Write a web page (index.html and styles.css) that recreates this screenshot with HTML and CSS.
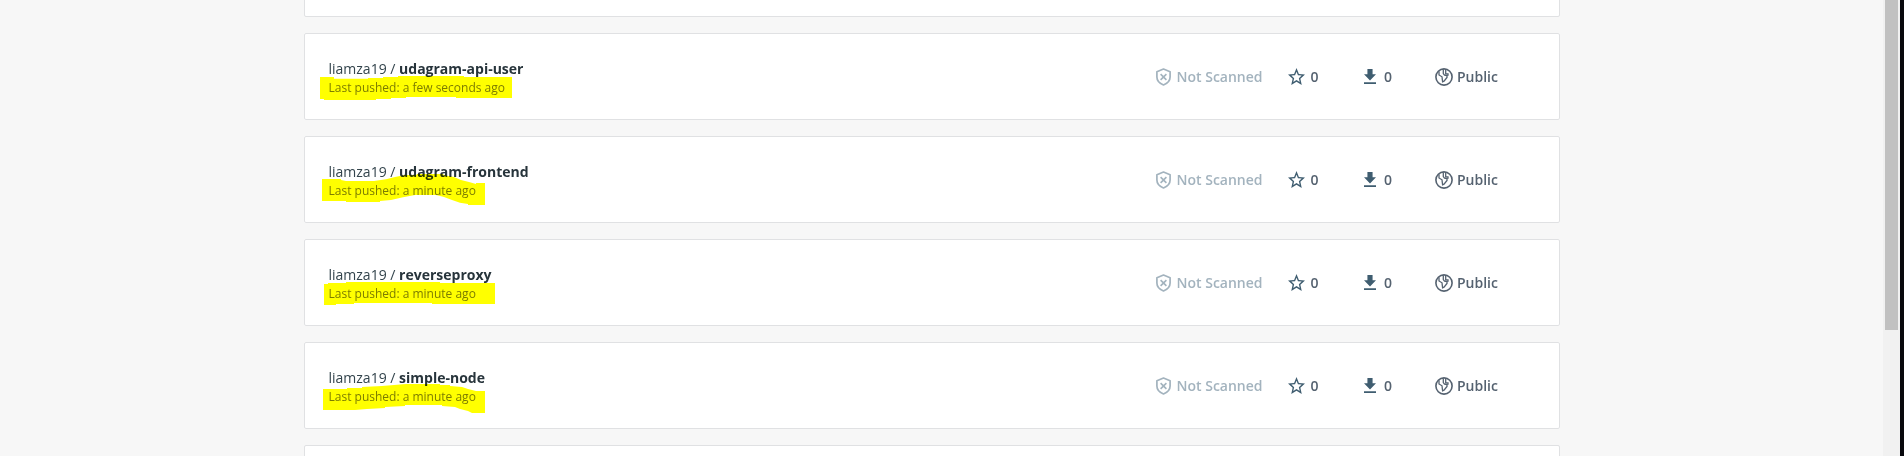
FILE: index.html
```html
<!DOCTYPE html>
<html lang="en">
<head>
<meta charset="utf-8">
<title>Repositories</title>
<link rel="stylesheet" href="styles.css">
</head>
<body>
<svg class="defs" width="0" height="0">
  <symbol id="shield" viewBox="0 0 15 18"><path d="M7.500 1 14.100 3.700V9c0 3.600-2.500 6.300-6.600 8C3.400 15.300.9 12.600.9 9V3.700Z" fill="none" stroke="currentColor" stroke-width="1.700" stroke-linejoin="round"/><path d="M4.600 6.100l5.800 5.800M10.400 6.100l-5.800 5.800" stroke="currentColor" stroke-width="1.600"/></symbol>
  <symbol id="star" viewBox="2 2 20 19" preserveAspectRatio="none"><path fill="currentColor" d="M22 9.240l-7.190-.62L12 2 9.190 8.630 2 9.240l5.460 4.730L5.820 21 12 17.270 18.180 21l-1.630-7.030L22 9.240zM12 15.400l-3.760 2.270 1-4.280-3.320-2.880 4.380-.38L12 6.100l1.710 4.040 4.380.38-3.320 2.880 1 4.280L12 15.400z"/></symbol>
  <symbol id="download" viewBox="5 3 14 17" preserveAspectRatio="none"><path fill="currentColor" d="M19 9h-4V3H9v6H5l7 7 7-7zM5 18v2h14v-2H5z"/></symbol>
  <symbol id="globe" viewBox="0 0 18 18"><circle cx="9" cy="9" r="8.100" fill="none" stroke="currentColor" stroke-width="1.600"/><path d="M4 3.300V7L7 8.800 7.600 13.800 9 13.200 12 9.500V7.500L9.500 7.200 8.300 5.500V1.300M10.700 1.300V5.800H13V7.800" fill="none" stroke="currentColor" stroke-width="1.300"/></symbol>
</svg>
<div class="page">
  <main class="list">
    <article class="card card-cut-top"></article>
    <article class="card">
      <div class="info"><div class="name">liamza19 / <b>udagram-api-user</b></div><div class="pushed">Last pushed: a few seconds ago</div></div>
      <div class="scan"><svg><use href="#shield"/></svg>Not Scanned</div><div class="stars"><svg><use href="#star"/></svg>0</div><div class="pulls"><svg><use href="#download"/></svg>0</div><div class="access"><svg><use href="#globe"/></svg>Public</div>
      <svg class="marker" viewBox="24 99 780 261"><path d="M72 231H114V236H216V234H261V231H306V228H504V231H648V294H480V291H330V294H285V297H240V300H84V297H72Z"/></svg>
    </article>
    <article class="card">
      <div class="info"><div class="name">liamza19 / <b>udagram-frontend</b></div><div class="pushed">Last pushed: a minute ago</div></div>
      <div class="scan"><svg><use href="#shield"/></svg>Not Scanned</div><div class="stars"><svg><use href="#star"/></svg>0</div><div class="pulls"><svg><use href="#download"/></svg>0</div><div class="access"><svg><use href="#globe"/></svg>Public</div>
      <svg class="marker" viewBox="12 -42 780 261"><path d="M66 87H123V90L138 93H222L258 88L285 81L315 75H350V72H430V75L462 81L483 90L507 96L528 102V99H555V165H504V162L480 158L456 150L432 141L408 135H345L309 142L273 150L240 153V156H138V153H66Z"/></svg>
    </article>
    <article class="card">
      <div class="info"><div class="name">liamza19 / <b>reverseproxy</b></div><div class="pushed">Last pushed: a minute ago</div></div>
      <div class="scan"><svg><use href="#shield"/></svg>Not Scanned</div><div class="stars"><svg><use href="#star"/></svg>0</div><div class="pulls"><svg><use href="#download"/></svg>0</div><div class="access"><svg><use href="#globe"/></svg>Public</div>
      <svg class="marker" viewBox="12 -33 780 261"><path d="M72 102H84V99H138V96H420V99H585V162H396V159H162V162H108V165H72Z"/></svg>
    </article>
    <article class="card">
      <div class="info"><div class="name">liamza19 / <b>simple-node</b></div><div class="pushed">Last pushed: a minute ago</div></div>
      <div class="scan"><svg><use href="#shield"/></svg>Not Scanned</div><div class="stars"><svg><use href="#star"/></svg>0</div><div class="pulls"><svg><use href="#download"/></svg>0</div><div class="access"><svg><use href="#globe"/></svg>Public</div>
      <svg class="marker" viewBox="12 -39 780 261"><path d="M69 102H141V99H186V96L246 93L282 90L318 87H420V90H450V93L486 96L504 102L528 108H555V174H516L504 168L480 162L465 156L426 153V150H315V153L255 156V159L201 162L165 165H69Z"/></svg>
    </article>
    <article class="card"></article>
  </main>
  <div class="scrollbar"><div class="thumb"></div></div>
  <div class="edge"></div>
</div>
</body>
</html>
```
FILE: styles.css
```css
body {
  margin: 0;
  background: #f7f7f7;
  font-family: "Open Sans", "Noto Sans", sans-serif;
  font-size: 14px;
  color: #445d6e;
}
.defs { display: none; }
.page {
  display: flex;
  height: 456px;
  overflow: hidden;
}
.list {
  width: 1256px;
  margin: 0 auto 0 304px;
  display: flex;
  flex-direction: column;
  gap: 16px;
}
.card {
  position: relative;
  display: grid;
  grid-template-columns: 825.5px 133.5px 76.5px 71px 80px;
  align-items: center;
  flex: none;
  box-sizing: border-box;
  height: 87px;
  padding: 0 24px 0 23.5px;
  background: #fff;
  border: 1px solid #e0e1e3;
  border-radius: 2px;
  isolation: isolate;
}
.card-cut-top { margin-top: -70px; }
.info { padding-top: 2px; }
.name {
  line-height: 19px;
  white-space: pre;
  color: #33444c;
}
.name b { font-weight: 700; color: #27343b; }
.pushed {
  margin-top: 1px;
  font-size: 12px;
  line-height: 17px;
  color: #7c7c7c;
}
.scan, .stars, .pulls, .access {
  display: flex;
  align-items: center;
  font-weight: 600;
  line-height: 20px;
  white-space: nowrap;
}
.scan { color: #a3b3be; padding-left: 2px; }
.scan svg { width: 15px; height: 18px; margin-right: 5.5px; }
.stars { color: #556270; }
.stars svg { width: 17px; height: 17px; margin-right: 6px; color: #3f5d70; }
.pulls { color: #556270; }
.pulls svg { width: 12px; height: 15px; margin-right: 8px; color: #3f5d70; }
.access { color: #556270; }
.access svg { width: 18px; height: 18px; margin-right: 4px; }
.marker {
  position: absolute;
  left: -1px;
  top: -1px;
  width: 260px;
  height: 87px;
  fill: #ff0;
  mix-blend-mode: multiply;
}
.scrollbar {
  width: 17px;
  background: #f1f1f1;
}
.thumb {
  width: 13px;
  height: 330px;
  margin-left: 2px;
  background: #c1c1c1;
}
.edge { width: 4px; background: #08080c; }
```
